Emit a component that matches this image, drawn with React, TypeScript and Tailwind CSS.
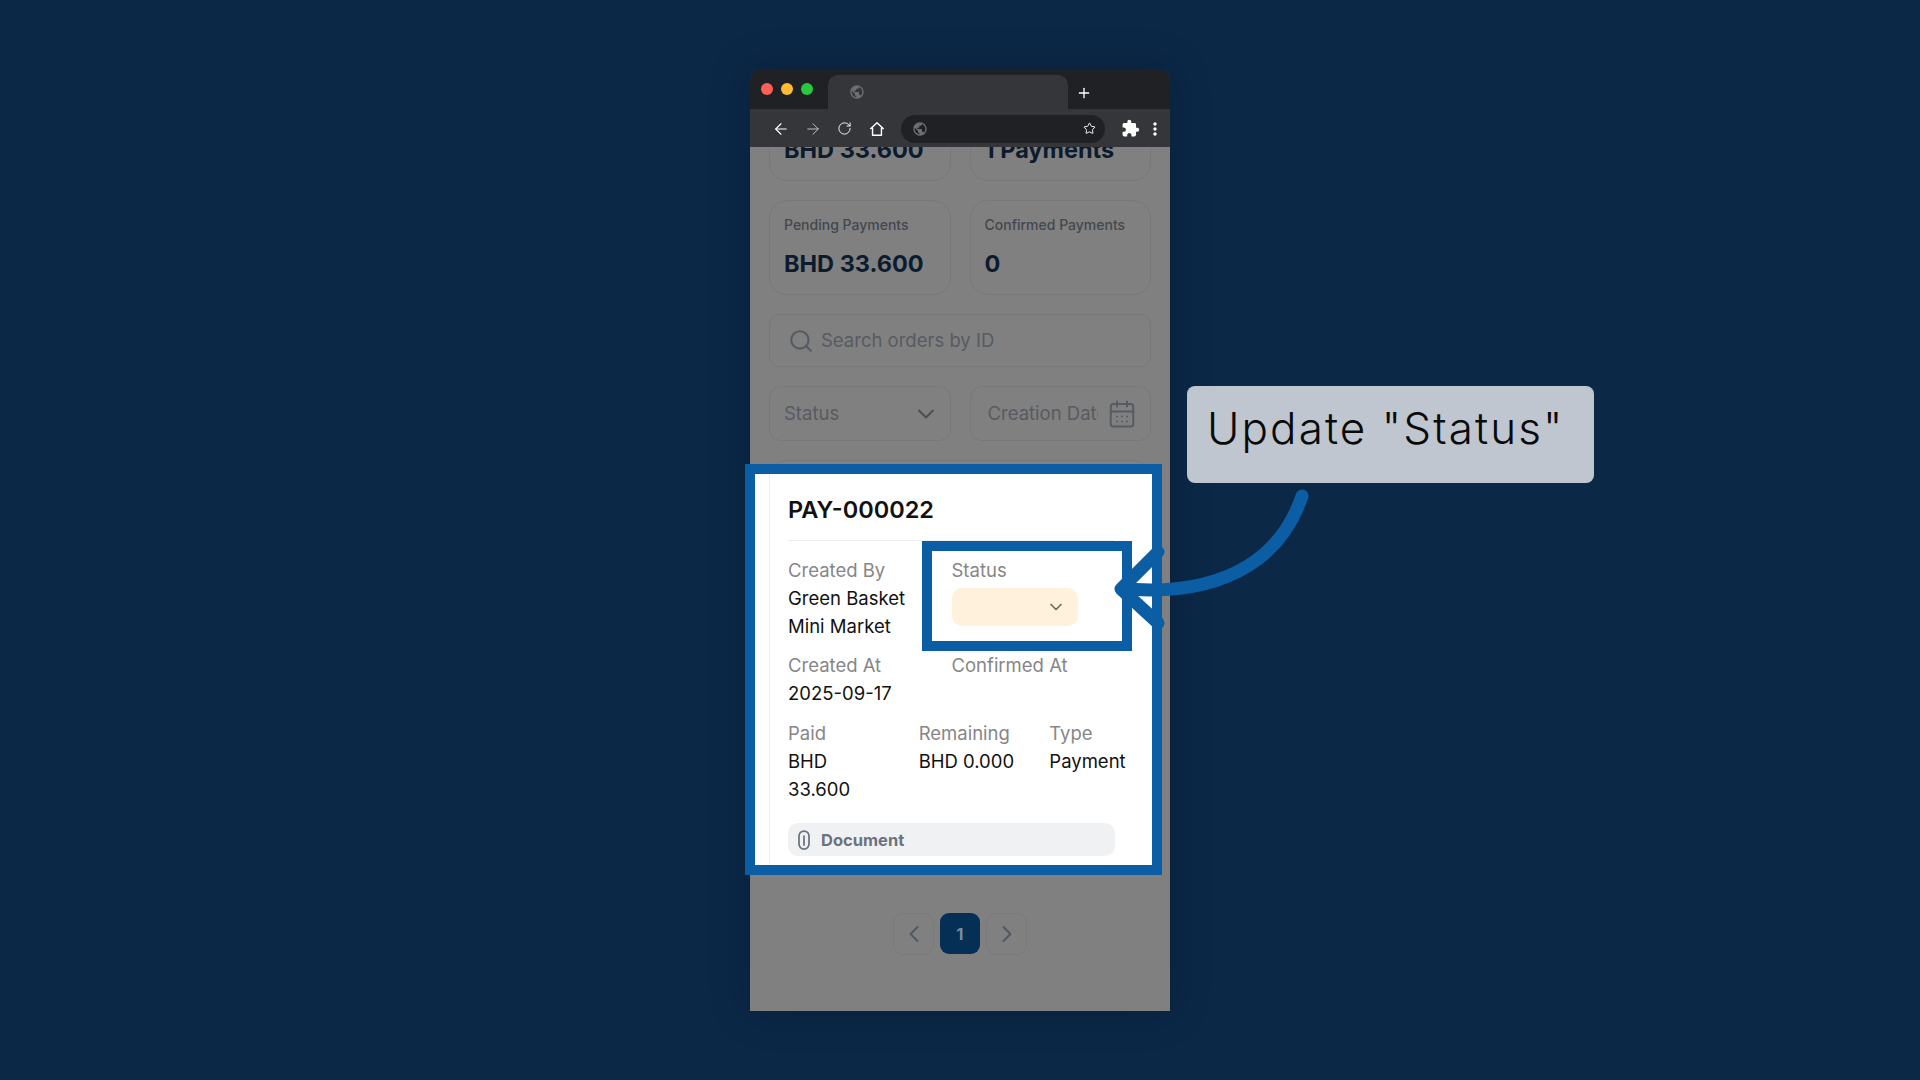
import { ArrowLeft, ArrowRight, RotateCw, Star, Plus, Search, ChevronDown, ChevronLeft, ChevronRight, CalendarDays } from "lucide-react";
import { MdPublic, MdExtension, MdMoreVert } from "react-icons/md";

function HomeIcon() {
  return (
    <svg width="16" height="16" viewBox="0 0 18 18" fill="none" stroke="white" strokeWidth="1.6" strokeLinejoin="round">
      <path d="M1.5 9 9 2l7.5 7M4 7.5V16h10V7.5" />
    </svg>
  );
}

function Clip() {
  return (
    <svg width="14" height="20" viewBox="0 0 14 20" fill="none" stroke="#6b7280" strokeWidth="1.75" strokeLinecap="round">
      <path d="M2 6a5 5 0 0 1 10 0v8a5 5 0 0 1-10 0zM7 6v9" />
    </svg>
  );
}

function Chrome() {
  return (
    <div className="flex flex-col">
      <div className="flex h-[40px] rounded-t-[12px] bg-[#202124]">
        <div className="flex w-[78px] items-center gap-[8px] pl-[11px]">
          <span className="h-[12px] w-[12px] rounded-full bg-[#ff5f57]" />
          <span className="h-[12px] w-[12px] rounded-full bg-[#febc2e]" />
          <span className="h-[12px] w-[12px] rounded-full bg-[#28c840]" />
        </div>
        <div className="mt-[6px] flex h-[34px] w-[240px] items-center rounded-t-[10px] bg-[#35363a] pl-[21px]">
          <MdPublic className="text-[#6d6e72]" size={16} />
        </div>
        <div className="flex items-center pl-[8px] pt-[8px]">
          <Plus className="text-white" size={16} strokeWidth={2} />
        </div>
      </div>
      <div className="flex h-[38px] items-center bg-[#35363a] pl-[22px] pt-[1px]">
        <ArrowLeft className="text-white" size={18} strokeWidth={1.5} />
        <ArrowRight className="ml-[14px] text-[#c8c8c8]" size={18} strokeWidth={1.25} />
        <RotateCw className="ml-[15px] text-white" size={15} strokeWidth={1.5} />
        <span className="ml-[17px] flex"><HomeIcon /></span>
        <div className="ml-[16px] flex h-[28px] w-[204px] items-center justify-between rounded-full bg-[#202124] pl-[11px] pr-[9px]">
          <MdPublic className="text-[#6d6e72]" size={16} />
          <Star className="text-white" size={13} strokeWidth={1.75} />
        </div>
        <MdExtension className="ml-[16px] text-white" size={19} />
        <MdMoreVert className="ml-[5px] text-white" size={20} />
      </div>
    </div>
  );
}

function Stat({ label, value }: { label: string; value: string }) {
  return (
    <div className="flex h-[95px] flex-col rounded-[18px] border border-[#787878] px-[14px] pt-[14px]">
      <div className="text-[14px] leading-[20px] font-medium text-[#43474e]">{label}</div>
      <div className="mt-[13px] text-[23.5px] leading-[32px] font-bold text-[#0c1c2e]">{value}</div>
    </div>
  );
}

function Page() {
  return (
    <div className="h-[864px] overflow-hidden bg-[#808080]">
      <div className="-mt-[61px] flex flex-col px-[19px]">
        <div className="grid grid-cols-2 gap-x-[19px] gap-y-[19px]">
          <Stat label="Total" value="BHD 33.600" />
          <Stat label="Total Payments" value="1 Payments" />
          <Stat label="Pending Payments" value="BHD 33.600" />
          <Stat label="Confirmed Payments" value="0" />
        </div>
        <div className="mt-[19px] flex h-[53px] items-center rounded-[10px] border border-[#787878] pl-[18px]">
          <Search className="text-[#555b64]" size={26} strokeWidth={2} />
          <span className="ml-[7px] pt-[1px] text-[18.5px] text-[#575b62]">Search orders by ID</span>
        </div>
        <div className="mt-[19px] grid grid-cols-2 gap-x-[19px]">
          <div className="flex h-[55px] items-center justify-between rounded-[12px] border border-[#787878] pl-[14px] pr-[10px]">
            <span className="pt-[1px] text-[18.5px] text-[#575b62]">Status</span>
            <ChevronDown className="text-[#4a4f57]" size={28} strokeWidth={1.75} />
          </div>
          <div className="flex h-[55px] items-center justify-between rounded-[12px] border border-[#787878] pl-[17px] pr-[13px]">
            <span className="w-[110px] overflow-hidden whitespace-nowrap pt-[1px] text-[18.5px] text-[#575b62]">Creation Date</span>
            <CalendarDays className="text-[#555b64]" size={30} strokeWidth={1.6} />
          </div>
        </div>
        <div className="mt-[19px] h-[410px] rounded-[18px] border border-[#787878]" />
        <div className="mt-[43px] flex justify-center gap-[6px]">
          <button className="flex h-[42px] w-[41px] items-center justify-center rounded-[10px] border border-[#7a7a7a]">
            <ChevronLeft className="text-[#4f5964]" size={28} strokeWidth={1.75} />
          </button>
          <button className="flex h-[41px] w-[40px] items-center justify-center rounded-[9px] bg-[#062f56] text-[16px] font-bold text-[#7c8ea3]">1</button>
          <button className="flex h-[42px] w-[41px] items-center justify-center rounded-[10px] border border-[#7a7a7a]">
            <ChevronRight className="text-[#4f5964]" size={28} strokeWidth={1.75} />
          </button>
        </div>
      </div>
    </div>
  );
}

function Field({ label, children }: { label: string; children?: React.ReactNode }) {
  return (
    <div className="text-[18.5px] leading-[28px]">
      <div className="text-[#868686]">{label}</div>
      {children && <div className="text-[#111111]">{children}</div>}
    </div>
  );
}

function Highlight() {
  return (
    <div className="absolute left-[-5px] top-[395px] h-[411px] w-[417px] border-[10px] border-[#0b5ea3] bg-white">
      <div className="relative ml-[14px] h-full overflow-hidden border-l border-[#eeeeee] pl-[18px]">
        <div className="flex h-[67px] w-[326px] items-start border-b border-[#eeeeee] pt-[21px]">
          <span className="text-[23.5px] leading-[30px] font-semibold text-[#111111]">PAY-000022</span>
        </div>
        <div className="mt-[15px] grid w-[326px] grid-cols-[140px_140px] gap-x-[23.5px] gap-y-[11px]">
          <Field label="Created By">Green Basket Mini Market</Field>
          <div className="text-[18.5px] leading-[28px]">
            <div className="text-[#868686]">Status</div>
            <div className="mt-[4px] flex h-[38px] w-[126px] items-center justify-end rounded-[10px] bg-[#fff1dc] pr-[12px]">
              <ChevronDown className="text-[#6b6b6b]" size={20} strokeWidth={2} />
            </div>
          </div>
          <Field label="Created At">2025-09-17</Field>
          <Field label="Confirmed At" />
        </div>
        <div className="mt-[12px] grid grid-cols-[100px_100px_100px] gap-x-[30.67px]">
          <Field label="Paid">BHD 33.600</Field>
          <Field label="Remaining">BHD 0.000</Field>
          <Field label="Type">Payment</Field>
        </div>
        <div className="mt-[20px] flex h-[33px] w-[327px] items-center rounded-[10px] bg-[#f0f1f3] pl-[9px]">
          <Clip />
          <span className="ml-[10px] pt-[1px] text-[16.5px] font-bold text-[#6b7280]">Document</span>
        </div>
        <div className="absolute left-[152px] top-[67px] h-[110px] w-[210px] border-[10px] border-[#0b5ea3]" />
      </div>
    </div>
  );
}

function Arrow() {
  return (
    <svg className="absolute left-0 top-0" width="1920" height="1080" fill="none" stroke="#0b5ea3" strokeLinecap="round" strokeLinejoin="round">
      <path d="M1302 496C1282 556 1230 590 1150 590L1122 589" strokeWidth="13" />
      <path d="M1158 552 1121 589 1158 623" strokeWidth="13" />
    </svg>
  );
}

export default function App() {
  return (
    <div className="relative flex h-[1080px] w-[1920px] justify-center overflow-hidden bg-[#0b2847] pt-[69px] font-['Inter',sans-serif]">
      <div className="relative h-[942px] w-[420px] shadow-[0_0_40px_rgba(0,0,0,0.2)]">
        <Chrome />
        <Page />
        <Highlight />
      </div>
      <div className="absolute left-[1187px] top-[386px] flex h-[97px] w-[407px] items-start rounded-[8px] bg-[#bfc6cf] pl-[20px] pt-[16px] text-[44px] leading-[52px] font-light tracking-[2.1px] whitespace-nowrap text-[#0a0a0a]">
        Update "Status"
      </div>
      <Arrow />
    </div>
  );
}
